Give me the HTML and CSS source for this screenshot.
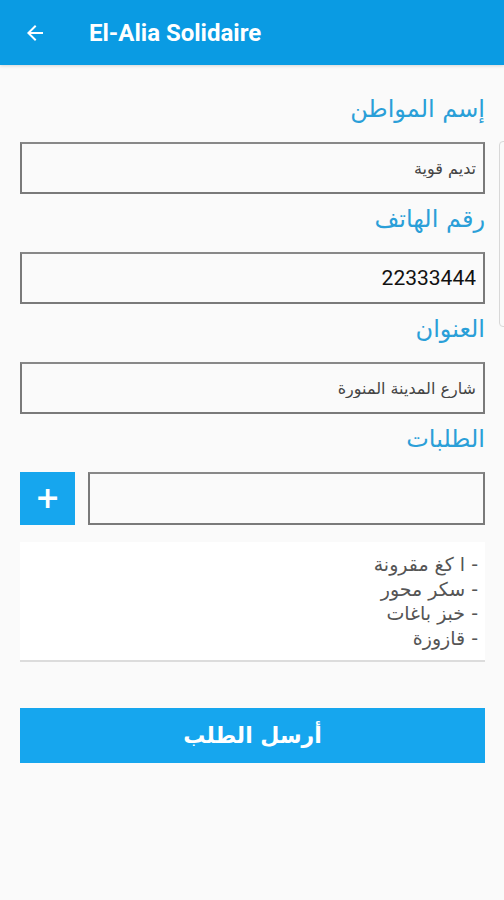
FILE: index.html
```html
<!DOCTYPE html>
<html lang="ar">
<head>
    <meta charset="UTF-8">
    <meta name="viewport" content="width=device-width, initial-scale=1.0">
    <title>El-Alia Solidaire</title>
    <link rel="stylesheet" href="styles.css">
</head>
<body>
    <header class="app-bar">
        <button class="back-btn" type="button" aria-label="رجوع">
            <svg viewBox="0 0 24 24" width="24" height="24"><path d="M20 11H7.83l5.59-5.59L12 4l-8 8 8 8 1.41-1.41L7.83 13H20v-2z" fill="#fff"/></svg>
        </button>
        <h1 class="app-title">El-Alia Solidaire</h1>
    </header>

    <main class="form" dir="rtl">
        <label class="field-label" for="citizen_name">إسم المواطن</label>
        <input id="citizen_name" class="field-input" type="text" value="تديم قوية">

        <label class="field-label" for="phone">رقم الهاتف</label>
        <input id="phone" class="field-input phone" type="text" value="22333444">

        <label class="field-label" for="address">العنوان</label>
        <input id="address" class="field-input" type="text" value="شارع المدينة المنورة">

        <label class="field-label" for="order_item">الطلبات</label>
        <div class="order-row">
            <input id="order_item" class="field-input" type="text">
            <button class="add-btn" type="button">+</button>
        </div>

        <ul class="order-list">
            <li>- ا كغ مقرونة</li>
            <li>- سكر محور</li>
            <li>- خبز باغات</li>
            <li>- قازوزة</li>
        </ul>

        <button class="submit-btn" type="button">أرسل الطلب</button>
    </main>

    <div class="edge-tab"></div>
</body>
</html>
```

FILE: styles.css
```css
:root {
    --primary-color: #0a9be3;
    --accent-color: #16a6ee;
    --label-color: #2a9fd8;
}
body {
    margin: 0;
    background: #fafafa;
    font-family: 'DejaVu Sans', sans-serif;
    color: #333;
    width: 504px;
    min-height: 900px;
    position: relative;
    overflow: hidden;
}
.app-bar {
    height: 65px;
    background: var(--primary-color);
    display: flex;
    align-items: center;
    box-shadow: 0 1px 3px rgba(0,0,0,0.15);
}
.back-btn {
    background: none;
    border: none;
    padding: 0;
    margin: 0 0 0 23px;
    width: 24px;
    height: 24px;
    display: flex;
}
.app-title {
    margin: 0 0 0 42px;
    color: #fff;
    font-family: Roboto, 'Liberation Sans', sans-serif;
    font-size: 24px;
    font-weight: 700;
}
.form {
    padding: 19px 19px 0 20px;
    display: flex;
    flex-direction: column;
}
.field-label {
    color: var(--label-color);
    font-size: 24px;
    line-height: 32px;
    padding: 9px 0 17px;
}
.field-input {
    box-sizing: border-box;
    height: 52px;
    width: 100%;
    margin: 0;
    border: 2px solid #7a7a7a;
    border-top-color: #888;
    background: #fafafa;
    padding: 0 7px;
    font-family: 'DejaVu Sans', sans-serif;
    font-size: 16px;
    color: #444;
    outline: none;
}
.field-input.phone {
    font-family: Roboto, 'Liberation Sans', sans-serif;
    font-size: 21px;
    color: #111;
}
.order-row {
    display: flex;
    gap: 13px;
    height: 53px;
}
.order-row .field-input {
    flex: 1;
    height: 53px;
}
.add-btn {
    width: 55px;
    height: 53px;
    border: none;
    background: var(--accent-color);
    color: #fff;
    font-family: 'DejaVu Sans', sans-serif;
    font-size: 30px;
    font-weight: 700;
    padding: 0 0 3px;
}
.order-list {
    list-style: none;
    margin: 17px 0 0;
    padding: 10px 7px 10px;
    background: #fff;
    border-bottom: 2px solid #dcdcdc;
    font-size: 19px;
    line-height: 24.5px;
    color: #555;
}
.submit-btn {
    margin-top: 46px;
    height: 55px;
    border: none;
    background: var(--accent-color);
    color: #fff;
    font-family: 'DejaVu Sans', sans-serif;
    font-size: 22px;
    font-weight: 700;
}
.edge-tab {
    position: absolute;
    left: 499px;
    top: 141px;
    width: 12px;
    height: 184px;
    border: 1px solid #d8d8d8;
    border-radius: 4px;
    background: #fafafa;
}
```
